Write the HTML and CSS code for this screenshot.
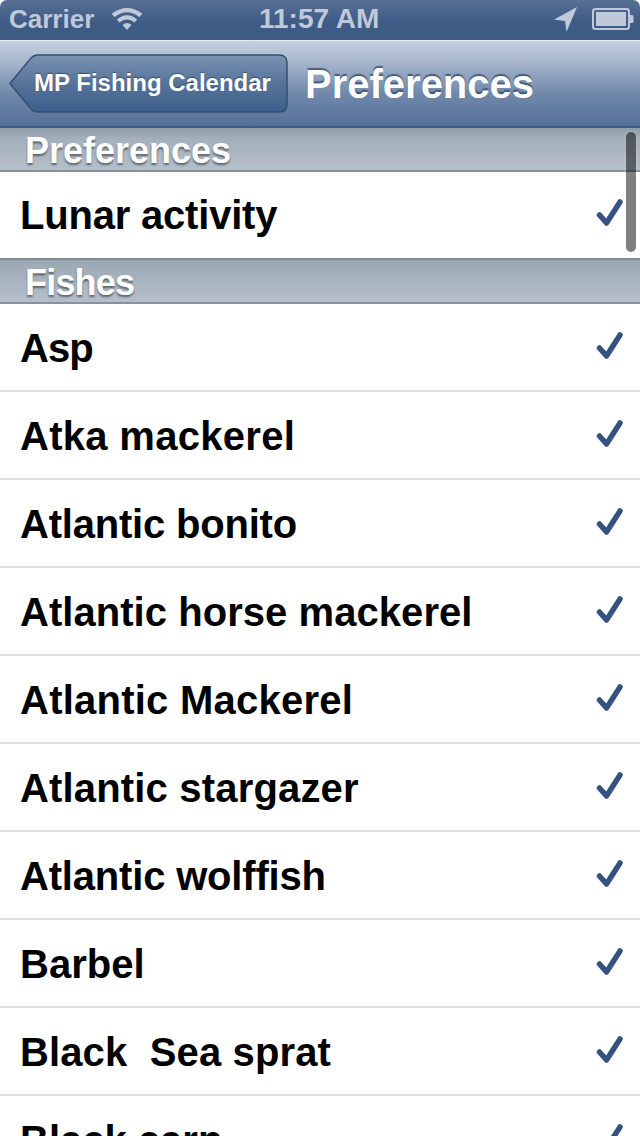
FILE: index.html
```html
<!DOCTYPE html>
<html lang="en">
<head>
<meta charset="utf-8">
<title>Preferences</title>
<link rel="stylesheet" href="styles.css">
</head>
<body>
<div class="screen">
  <div class="status">
    <div class="status-left">
      <span>Carrier</span>
      <svg class="wifi" width="34" height="24" viewBox="0 0 34 24"><path d="M17 23 L12.5 18 Q17 14 21.500 18 Z M9.500 15.500 L6.800 12.500 Q17 4 27.200 12.500 L24.500 15.500 Q17 9.500 9.500 15.500 Z M4.600 10 L1.500 6.800 Q17 -5 32.500 6.800 L29.400 10 Q17 0.500 4.600 10 Z" fill="#bfc9d9"/></svg>
    </div>
    <span class="clock">11:57 AM</span>
    <div class="status-right">
      <svg width="24" height="24" viewBox="0 0 24 24"><path d="M23 0 L0 12.500 L11 14 L12.500 25 Z" fill="#bfc9d9"/></svg>
      <svg width="42" height="22" viewBox="0 0 42 22"><rect x="1" y="1" width="36" height="20" rx="2.500" fill="none" stroke="#bfc9d9" stroke-width="2"/><rect x="4" y="4" width="30" height="14" fill="#bfc9d9"/><path d="M38 7 h2 q1.500 0 1.500 1.500 v5 q0 1.500 -1.500 1.500 h-2 Z" fill="#bfc9d9"/></svg>
    </div>
  </div>
  <header class="nav">
    <div class="back">
      <svg class="back-shape" width="280" height="60" viewBox="0 0 280 60" preserveAspectRatio="none">
        <defs><linearGradient id="bk" x1="0" y1="0" x2="0" y2="1"><stop offset="0" stop-color="#7b93b4"/><stop offset="0.5" stop-color="#567398"/><stop offset="1" stop-color="#3d5f8e"/></linearGradient></defs>
        <path d="M1 29.500 L22 4 Q25 1 29 1 L270 1 Q278 1 278 9 L278 50 Q278 58 270 58 L29 58 Q25 58 22 55 Z" fill="url(#bk)" stroke="#34506f" stroke-width="1.500"/>
      </svg>
      <span class="back-label">MP Fishing Calendar</span>
    </div>
    <h1 class="title">Preferences</h1>
  </header>
  <main class="list">
    <div class="section first">Preferences</div>
    <div class="row short"><span class="fit-lunar">Lunar activity</span><svg class="check" width="28" height="30" viewBox="0 0 28 30"><path d="M3.500 17 L10.500 25 L24 4" fill="none" stroke="#375185" stroke-width="5.500" stroke-linecap="round" stroke-linejoin="round"/></svg></div>
    <div class="section"><span class="fit-fishes">Fishes</span></div>
    <div class="row"><span class="fit-asp">Asp</span><svg class="check" width="28" height="30" viewBox="0 0 28 30"><path d="M3.500 17 L10.500 25 L24 4" fill="none" stroke="#375185" stroke-width="5.500" stroke-linecap="round" stroke-linejoin="round"/></svg></div>
    <div class="row"><span class="fit-atka">Atka mackerel</span><svg class="check" width="28" height="30" viewBox="0 0 28 30"><path d="M3.500 17 L10.500 25 L24 4" fill="none" stroke="#375185" stroke-width="5.500" stroke-linecap="round" stroke-linejoin="round"/></svg></div>
    <div class="row"><span class="fit-bonito">Atlantic bonito</span><svg class="check" width="28" height="30" viewBox="0 0 28 30"><path d="M3.500 17 L10.500 25 L24 4" fill="none" stroke="#375185" stroke-width="5.500" stroke-linecap="round" stroke-linejoin="round"/></svg></div>
    <div class="row"><span class="fit-horse">Atlantic horse mackerel</span><svg class="check" width="28" height="30" viewBox="0 0 28 30"><path d="M3.500 17 L10.500 25 L24 4" fill="none" stroke="#375185" stroke-width="5.500" stroke-linecap="round" stroke-linejoin="round"/></svg></div>
    <div class="row"><span class="fit-mackerel">Atlantic Mackerel</span><svg class="check" width="28" height="30" viewBox="0 0 28 30"><path d="M3.500 17 L10.500 25 L24 4" fill="none" stroke="#375185" stroke-width="5.500" stroke-linecap="round" stroke-linejoin="round"/></svg></div>
    <div class="row"><span class="fit-stargazer">Atlantic stargazer</span><svg class="check" width="28" height="30" viewBox="0 0 28 30"><path d="M3.500 17 L10.500 25 L24 4" fill="none" stroke="#375185" stroke-width="5.500" stroke-linecap="round" stroke-linejoin="round"/></svg></div>
    <div class="row"><span class="fit-wolffish">Atlantic wolffish</span><svg class="check" width="28" height="30" viewBox="0 0 28 30"><path d="M3.500 17 L10.500 25 L24 4" fill="none" stroke="#375185" stroke-width="5.500" stroke-linecap="round" stroke-linejoin="round"/></svg></div>
    <div class="row"><span>Barbel</span><svg class="check" width="28" height="30" viewBox="0 0 28 30"><path d="M3.500 17 L10.500 25 L24 4" fill="none" stroke="#375185" stroke-width="5.500" stroke-linecap="round" stroke-linejoin="round"/></svg></div>
    <div class="row"><span class="fit-sprat">Black&nbsp; Sea sprat</span><svg class="check" width="28" height="30" viewBox="0 0 28 30"><path d="M3.500 17 L10.500 25 L24 4" fill="none" stroke="#375185" stroke-width="5.500" stroke-linecap="round" stroke-linejoin="round"/></svg></div>
    <div class="row"><span>Black carp</span><svg class="check" width="28" height="30" viewBox="0 0 28 30"><path d="M3.500 17 L10.500 25 L24 4" fill="none" stroke="#375185" stroke-width="5.500" stroke-linecap="round" stroke-linejoin="round"/></svg></div>
  </main>
  <div class="scrollbar"></div>
</div>
</body>
</html>
```
FILE: styles.css
```css
* { box-sizing: border-box; }
html, body { margin: 0; height: 100%; background: #000; }
body { overflow: hidden; font-family: "Liberation Sans", Arial, sans-serif; }
.screen { position: relative; width: 640px; height: 1136px; overflow: hidden; background: #fff; }

.status {
  height: 40px; display: flex; align-items: center; justify-content: space-between;
  padding: 0 6px 2px 9px; color: #bfc9d9; font-size: 26px; font-weight: 700;
  background: linear-gradient(#566f94, #3f5c87 55%, #3d5a85);
  border-radius: 7px 7px 0 0; position: relative;
}
.status-left { display: flex; align-items: center; gap: 16px; }
.clock { position: absolute; left: 259px; top: 3px; font-size: 28px; }
.status-right { display: flex; align-items: center; gap: 14px; }

.nav {
  height: 88px; display: flex; align-items: center; gap: 16px; padding: 0 0 0 9px;
  background: linear-gradient(#c5d0e0 0, #a7b6cc 25%, #7088aa 62%, #557199 100%);
  border-top: 1px solid #e9eef5; border-bottom: 2px solid #3e5a84;
}
.back { position: relative; width: 280px; height: 60px; flex: none; display: flex; align-items: center; }
.back-shape { position: absolute; inset: 0; }
.back-label {
  position: relative; margin-left: 25px; padding-bottom: 2px; font-size: 24px; font-weight: 700; color: #fff;
  text-shadow: 0 -1px 1px rgba(30, 50, 80, .6);
}
.title {
  margin: 0; padding-top: 2px; font-size: 40px; font-weight: 700; color: #fff;
  text-shadow: 0 -2px 1px rgba(40, 60, 90, .7);
}

.section {
  height: 46px; padding-left: 25px; font-size: 36px; font-weight: 700; line-height: 46px;
  color: #fff; text-shadow: 0 2px 2px rgba(70, 80, 95, .8);
  background: linear-gradient(#9aa8b4, #b5bfca);
  border-top: 2px solid #7f8a96; border-bottom: 2px solid #87929d;
}
.section.first { height: 44px; line-height: 46px; border-top: 0; background: linear-gradient(#8f9da9, #a3b0bb 25%, #b5bfca); }

.row {
  height: 88px; display: flex; align-items: center; justify-content: space-between;
  padding: 2px 16px 0 20px; font-size: 40px; font-weight: 700; color: #000;
  border-bottom: 2px solid #dedede;
}
.row.short { height: 86px; border-bottom: 0; padding-top: 0; }
.check { flex: none; position: relative; top: -2px; }

.fit-lunar { letter-spacing: -.2px; }
.fit-fishes { letter-spacing: -.8px; }
.fit-asp { letter-spacing: -1px; }
.fit-atka { letter-spacing: .3px; }
.fit-bonito { letter-spacing: -.2px; }
.fit-horse { letter-spacing: .05px; }
.fit-mackerel { letter-spacing: .24px; }
.fit-stargazer { letter-spacing: .17px; }
.fit-wolffish { letter-spacing: -.18px; }
.fit-sprat { letter-spacing: .12px; }

.scrollbar {
  position: absolute; left: 626px; top: 132px; width: 10px; height: 120px;
  border-radius: 5px; background: rgba(0, 0, 0, .5); box-shadow: 0 0 0 1px rgba(255, 255, 255, .15);
}
```
